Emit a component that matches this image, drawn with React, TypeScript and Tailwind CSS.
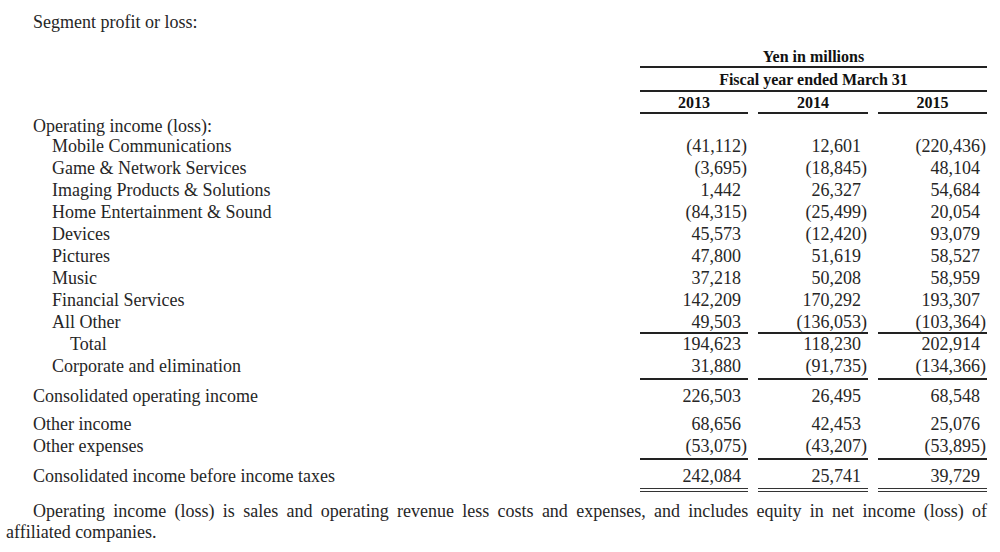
import React from 'react';

type Row = {
  label: string;
  indent: 0 | 1 | 2;
  values?: [string, string, string];
  h: string;
  mt?: string;
  rule?: 'single' | 'double';
};

const rows: Row[] = [
  { label: 'Operating income (loss):', indent: 0, h: 'h-[20px]' },
  { label: 'Mobile Communications', indent: 1, values: ['(41,112)', '12,601', '(220,436)'], h: 'h-[22px]' },
  { label: 'Game & Network Services', indent: 1, values: ['(3,695)', '(18,845)', '48,104'], h: 'h-[22px]' },
  { label: 'Imaging Products & Solutions', indent: 1, values: ['1,442', '26,327', '54,684'], h: 'h-[22px]' },
  { label: 'Home Entertainment & Sound', indent: 1, values: ['(84,315)', '(25,499)', '20,054'], h: 'h-[22px]' },
  { label: 'Devices', indent: 1, values: ['45,573', '(12,420)', '93,079'], h: 'h-[22px]' },
  { label: 'Pictures', indent: 1, values: ['47,800', '51,619', '58,527'], h: 'h-[22px]' },
  { label: 'Music', indent: 1, values: ['37,218', '50,208', '58,959'], h: 'h-[22px]' },
  { label: 'Financial Services', indent: 1, values: ['142,209', '170,292', '193,307'], h: 'h-[22px]' },
  { label: 'All Other', indent: 1, values: ['49,503', '(136,053)', '(103,364)'], h: 'h-[22px]', rule: 'single' },
  { label: 'Total', indent: 2, values: ['194,623', '118,230', '202,914'], h: 'h-[22px]' },
  { label: 'Corporate and elimination', indent: 1, values: ['31,880', '(91,735)', '(134,366)'], h: 'h-[24px]', rule: 'single' },
  { label: 'Consolidated operating income', indent: 0, values: ['226,503', '26,495', '68,548'], h: 'h-[22px]', mt: 'mt-[6px]' },
  { label: 'Other income', indent: 0, values: ['68,656', '42,453', '25,076'], h: 'h-[22px]', mt: 'mt-[6px]' },
  { label: 'Other expenses', indent: 0, values: ['(53,075)', '(43,207)', '(53,895)'], h: 'h-[24px]', rule: 'single' },
  { label: 'Consolidated income before income taxes', indent: 0, values: ['242,084', '25,741', '39,729'], h: 'h-[26px]', mt: 'mt-[6px]', rule: 'double' },
];

const indentClass = ['pl-[33px]', 'pl-[52px]', 'pl-[70px]'];
const colClass = ['w-[108px]', 'ml-[10px] w-[110px]', 'ml-[10px] w-[109px]'];

function Amount({ v }: { v: string }) {
  // negatives hang the closing paren past the column of digits
  if (v.startsWith('(')) {
    return (
      <>
        {v.slice(0, -1)}
        <span className="mr-[-6px]">)</span>
      </>
    );
  }
  return <>{v}</>;
}

export default function App() {
  return (
    <div
      className="w-[1000px] h-[552px] bg-white text-[#262626] overflow-hidden pr-[13px]"
      style={{ fontFamily: '"Liberation Serif", "Times New Roman", serif' }}
    >
      <div className="pt-[11px] pl-[33px] h-[33px] text-[18px] leading-[22px]">Segment profit or loss:</div>

      {/* column headers */}
      <div className="flex justify-end mt-[13px]">
        <div className="w-[347px] text-[16px] font-bold text-[#111]">
          <div className="h-[22px] leading-[22px] text-center border-b-2 border-[#222]">Yen in millions</div>
          <div className="h-[24px] leading-[24px] text-center border-b-2 border-[#222]">Fiscal year ended March 31</div>
          <div className="flex">
            {['2013', '2014', '2015'].map((y, i) => (
              <div key={y} className={`${colClass[i]} h-[22px] leading-[22px] text-center border-b-2 border-[#222]`}>
                {y}
              </div>
            ))}
          </div>
        </div>
      </div>

      {/* body rows */}
      <div className="mt-[2px] text-[18px]">
        {rows.map((r) => (
          <div key={r.label} className={`flex ${r.h} ${r.mt ?? ''}`}>
            <div className={`flex-1 ${indentClass[r.indent]} leading-[20px]`}>{r.label}</div>
            {r.values &&
              r.values.map((v, i) => (
                <div
                  key={i}
                  className={`${colClass[i]} text-right pr-[7px] leading-[20px] ${
                    r.rule === 'single'
                      ? 'border-b-2 border-[#222]'
                      : r.rule === 'double'
                      ? 'border-b-[4px] border-double border-[#333]'
                      : ''
                  }`}
                >
                  <Amount v={v} />
                </div>
              ))}
          </div>
        ))}
      </div>

      {/* footnote */}
      <div className="mt-[9px] pl-[6px] text-[18px] leading-[21px]">
        <div className="pl-[27px] text-justify [text-align-last:justify]">
          Operating income (loss) is sales and operating revenue less costs and expenses, and includes equity in net income (loss) of
        </div>
        <div>affiliated companies.</div>
      </div>
    </div>
  );
}
